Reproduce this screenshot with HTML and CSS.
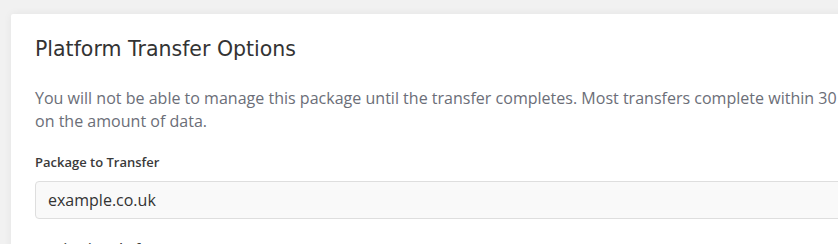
FILE: index.html
```html
<!DOCTYPE html>
<html lang="en">
<head>
<meta charset="utf-8">
<title>Platform Transfer Options</title>
<link rel="stylesheet" href="styles.css">
</head>
<body>
<main class="page">
  <section class="card">
    <h2 class="card-title">Platform Transfer Options</h2>
    <p class="card-text">You will not be able to manage this package until the transfer completes. Most transfers complete within 30 minutes, depending on the amount of data.</p>
    <div class="field">
      <label class="field-label" for="pkg">Package to Transfer</label>
      <div class="field-input" id="pkg">example.co.uk</div>
    </div>
    <div class="field">
      <label class="field-label">Destination Platform</label>
      <div class="field-input">Select a platform</div>
    </div>
  </section>
</main>
</body>
</html>
```

FILE: styles.css
```css
html, body {
  margin: 0;
  padding: 0;
  overflow: hidden;
}
body {
  background: #f1f1f1;
  font-family: "Open Sans", "Liberation Sans", sans-serif;
  width: 838px;
  height: 244px;
}
.page {
  padding: 14px 0 0 11px;
}
.card {
  width: 1030px;
  background: #fff;
  padding: 23px 24px 24px;
  box-shadow: 0 0 8px rgba(0, 0, 0, 0.06);
  border-radius: 2px;
}
.card-title {
  margin: 0;
  font-family: "DejaVu Sans", "Noto Sans", sans-serif;
  font-weight: 400;
  font-size: 20.5px;
  line-height: 24px;
  color: #333;
}
.card-text {
  max-width: 970px;
  margin: 26px 0 0;
  font-size: 16.05px;
  line-height: 23px;
  color: #6b6e78;
}
.field {
  margin-top: 20px;
}
.field-label {
  display: block;
  font-size: 13px;
  font-weight: 600;
  line-height: 18px;
  color: #3a3a3a;
  margin-bottom: 10px;
}
.field-input {
  height: 36px;
  border: 1px solid #dedede;
  border-radius: 4px;
  background: #f9f9f9;
  padding: 0 12px;
  font-size: 16px;
  line-height: 36px;
  color: #333;
}
```
